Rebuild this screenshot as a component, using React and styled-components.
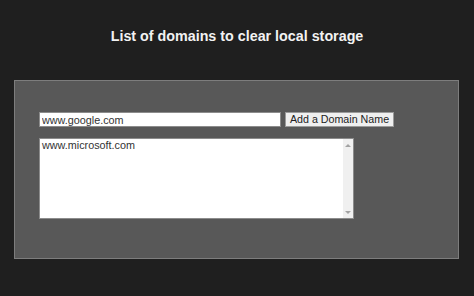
import React from "react";
import styled, { createGlobalStyle } from "styled-components";

const Global = createGlobalStyle`
  html, body { margin: 0; padding: 0; background: #1f1f1f; }
  body { font-family: "Liberation Sans", Arial, sans-serif; }
`;

const Page = styled.div`
  width: 474px;
  height: 296px;
  background: #1f1f1f;
  display: flex;
  flex-direction: column;
  align-items: center;
  box-sizing: border-box;
  padding-top: 28px;
`;

const Title = styled.h1`
  margin: 0;
  font-size: 14.3px;
  line-height: 17px;
  font-weight: bold;
  color: #f2f2f2;
`;

const Panel = styled.section`
  align-self: flex-start;
  margin: 35px 0 0 14px;
  width: 445px;
  height: 179px;
  box-sizing: border-box;
  background: #585858;
  border: 1px solid #7d7d7d;
  padding: 31px 24px 0;
  display: flex;
  flex-direction: column;
  gap: 11px;
`;

const Row = styled.div`
  display: flex;
  gap: 4px;
  height: 15px;
`;

const Input = styled.input`
  width: 242px;
  height: 15px;
  box-sizing: border-box;
  border: 1px solid #8c8c8c;
  background: #fff;
  padding: 0 2px;
  margin: 0;
  font-family: "Liberation Sans", Arial, sans-serif;
  font-size: 10.8px;
  color: #333;
  outline: none;
`;

const Button = styled.button`
  width: 109px;
  height: 15px;
  box-sizing: border-box;
  border: 1px solid #9a9a9a;
  background: #efefef;
  margin: 0;
  padding: 0;
  font-family: "Liberation Sans", Arial, sans-serif;
  font-size: 10.7px;
  line-height: 13px;
  color: #222;
`;

const ListBox = styled.div`
  width: 315px;
  height: 81px;
  box-sizing: border-box;
  border: 1px solid #8c8c8c;
  background: #fff;
  display: flex;
`;

const ListText = styled.div`
  flex: 1;
  padding: 0 2px;
  font-size: 10.8px;
  line-height: 13px;
  color: #333;
`;

const Scrollbar = styled.div`
  width: 10px;
  background: #f0f0f0;
  display: flex;
  flex-direction: column;
  justify-content: space-between;
  align-items: center;
  padding: 5px 0 4px;
`;

const Arrow = styled.div`
  width: 0;
  height: 0;
  border-left: 3px solid transparent;
  border-right: 3px solid transparent;
  ${(p) =>
    p.$down
      ? "border-top: 3px solid #a3a3a3;"
      : "border-bottom: 3px solid #a3a3a3;"}
`;

export default function App() {
  return (
    <>
      <Global />
      <Page>
        <Title>List of domains to clear local storage</Title>
        <Panel>
          <Row>
            <Input defaultValue="www.google.com" />
            <Button>Add a Domain Name</Button>
          </Row>
          <ListBox>
            <ListText>www.microsoft.com</ListText>
            <Scrollbar>
              <Arrow />
              <Arrow $down />
            </Scrollbar>
          </ListBox>
        </Panel>
      </Page>
    </>
  );
}
